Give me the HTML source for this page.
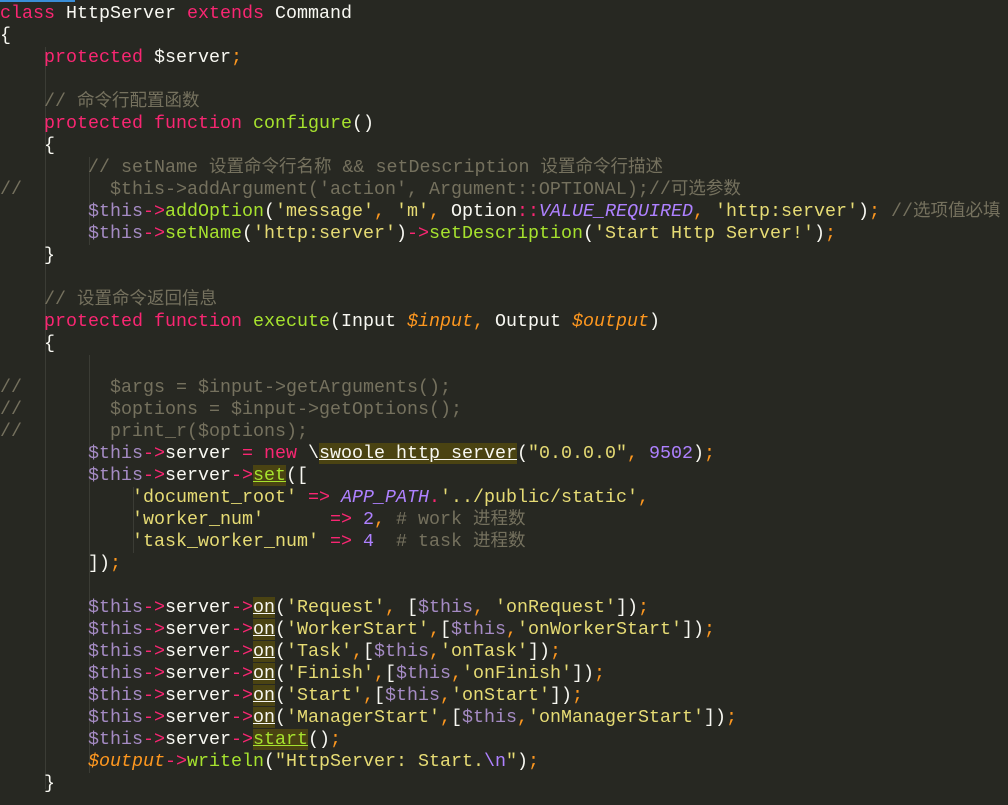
<!DOCTYPE html>
<html><head><meta charset="utf-8"><style>
html,body{margin:0;padding:0;background:#272822;width:1008px;height:805px;overflow:hidden}
#bar{position:absolute;left:0;top:0;width:75px;height:2px;background:#3a8ed8}
pre{margin:0;position:absolute;left:0;top:3px;font-family:"Liberation Mono","Noto Sans CJK SC",monospace;font-size:18.33px;line-height:22px;color:#f8f8f2;white-space:pre}
.k{color:#f92672}.f{color:#a6e22e}.s{color:#e6db74}.c{color:#75715e}.n{color:#ae81ff}.t{color:#a58bc4}.o{color:#fd971f}.i{font-style:italic}
.z{font-family:"Noto Sans CJK SC",sans-serif;font-size:17.5px;line-height:0}
.h{background:#4a4312;text-decoration:underline}
.g{position:absolute;width:1px;background:#3b3c35}
</style></head><body>
<div id="bar"></div>
<div class="g" style="left:45px;top:47px;height:742px"></div>
<div class="g" style="left:89px;top:157px;height:88px"></div>
<div class="g" style="left:89px;top:355px;height:418px"></div>
<div class="g" style="left:133px;top:487px;height:66px"></div>
<pre><span class="k">class</span> HttpServer <span class="k">extends</span> Command
{
    <span class="k">protected</span> $server<span class="o">;</span>

    <span class="c">// <span class="z">命令行配置函数</span></span>
    <span class="k">protected</span> <span class="k">function</span> <span class="f">configure</span>()
    {
        <span class="c">// setName <span class="z">设置命令行名称</span> &amp;&amp; setDescription <span class="z">设置命令行描述</span></span>
<span class="c">//        $this-&gt;addArgument('action', Argument::OPTIONAL);//<span class="z">可选参数</span></span>
        <span class="t">$this</span><span class="k">-&gt;</span><span class="f">addOption</span>(<span class="s">'message'</span><span class="o">,</span> <span class="s">'m'</span><span class="o">,</span> Option<span class="k">::</span><span class="n i">VALUE_REQUIRED</span><span class="o">,</span> <span class="s">'http:server'</span>)<span class="o">;</span> <span class="c">//<span class="z">选项值必填</span></span>
        <span class="t">$this</span><span class="k">-&gt;</span><span class="f">setName</span>(<span class="s">'http:server'</span>)<span class="k">-&gt;</span><span class="f">setDescription</span>(<span class="s">'Start Http Server!'</span>)<span class="o">;</span>
    }

    <span class="c">// <span class="z">设置命令返回信息</span></span>
    <span class="k">protected</span> <span class="k">function</span> <span class="f">execute</span>(Input <span class="o i">$input</span><span class="o">,</span> Output <span class="o i">$output</span>)
    {

<span class="c">//        $args = $input-&gt;getArguments();</span>
<span class="c">//        $options = $input-&gt;getOptions();</span>
<span class="c">//        print_r($options);</span>
        <span class="t">$this</span><span class="k">-&gt;</span>server <span class="k">=</span> <span class="k">new</span> \<span class="h">swoole_http_server</span>(<span class="s">"0.0.0.0"</span><span class="o">,</span> <span class="n">9502</span>)<span class="o">;</span>
        <span class="t">$this</span><span class="k">-&gt;</span>server<span class="k">-&gt;</span><span class="f h">set</span>([
            <span class="s">'document_root'</span> <span class="k">=&gt;</span> <span class="n i">APP_PATH</span><span class="k">.</span><span class="s">'../public/static'</span><span class="o">,</span>
            <span class="s">'worker_num'</span>      <span class="k">=&gt;</span> <span class="n">2</span><span class="o">,</span> <span class="c"># work <span class="z">进程数</span></span>
            <span class="s">'task_worker_num'</span> <span class="k">=&gt;</span> <span class="n">4</span>  <span class="c"># task <span class="z">进程数</span></span>
        ])<span class="o">;</span>

        <span class="t">$this</span><span class="k">-&gt;</span>server<span class="k">-&gt;</span><span class="h">on</span>(<span class="s">'Request'</span><span class="o">,</span> [<span class="t">$this</span><span class="o">,</span> <span class="s">'onRequest'</span>])<span class="o">;</span>
        <span class="t">$this</span><span class="k">-&gt;</span>server<span class="k">-&gt;</span><span class="h">on</span>(<span class="s">'WorkerStart'</span><span class="o">,</span>[<span class="t">$this</span><span class="o">,</span><span class="s">'onWorkerStart'</span>])<span class="o">;</span>
        <span class="t">$this</span><span class="k">-&gt;</span>server<span class="k">-&gt;</span><span class="h">on</span>(<span class="s">'Task'</span><span class="o">,</span>[<span class="t">$this</span><span class="o">,</span><span class="s">'onTask'</span>])<span class="o">;</span>
        <span class="t">$this</span><span class="k">-&gt;</span>server<span class="k">-&gt;</span><span class="h">on</span>(<span class="s">'Finish'</span><span class="o">,</span>[<span class="t">$this</span><span class="o">,</span><span class="s">'onFinish'</span>])<span class="o">;</span>
        <span class="t">$this</span><span class="k">-&gt;</span>server<span class="k">-&gt;</span><span class="h">on</span>(<span class="s">'Start'</span><span class="o">,</span>[<span class="t">$this</span><span class="o">,</span><span class="s">'onStart'</span>])<span class="o">;</span>
        <span class="t">$this</span><span class="k">-&gt;</span>server<span class="k">-&gt;</span><span class="h">on</span>(<span class="s">'ManagerStart'</span><span class="o">,</span>[<span class="t">$this</span><span class="o">,</span><span class="s">'onManagerStart'</span>])<span class="o">;</span>
        <span class="t">$this</span><span class="k">-&gt;</span>server<span class="k">-&gt;</span><span class="f h">start</span>()<span class="o">;</span>
        <span class="o i">$output</span><span class="k">-&gt;</span><span class="f">writeln</span>(<span class="s">"HttpServer: Start.<span class="n">\n</span>"</span>)<span class="o">;</span>
    }
</pre>
</body></html>
